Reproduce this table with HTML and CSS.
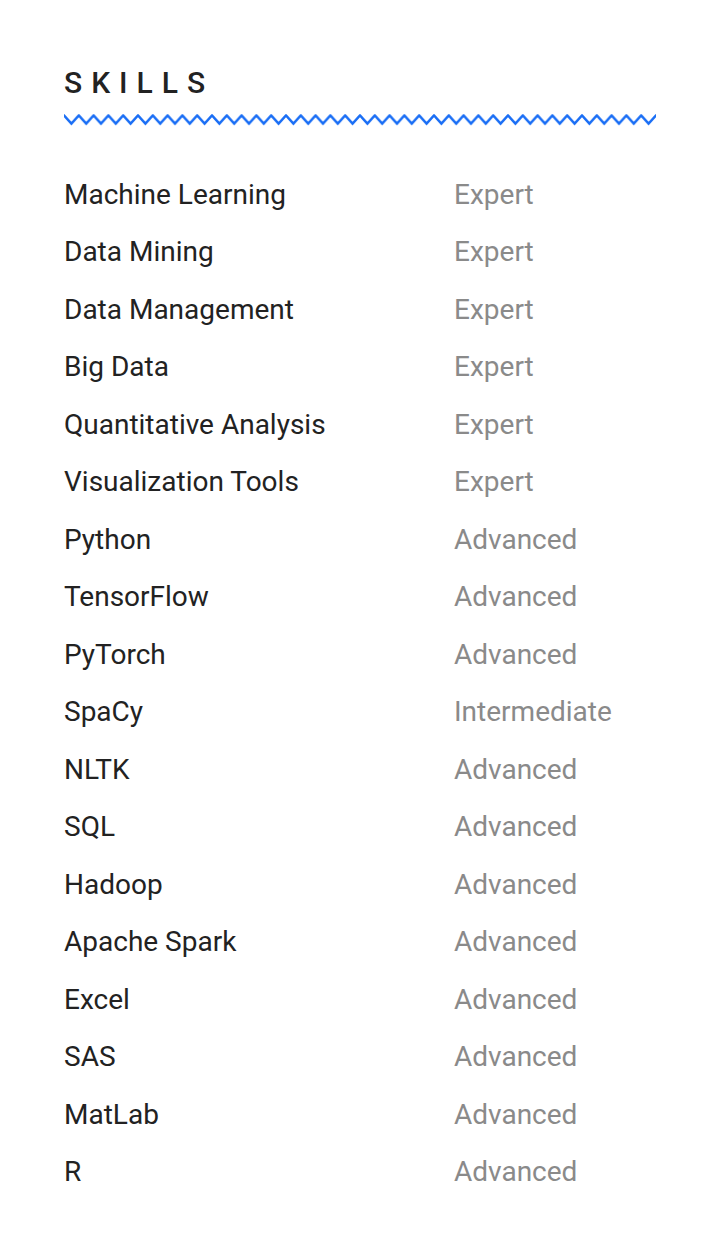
FILE: index.html
```html
<!DOCTYPE html>
<html lang="en">
<head>
<meta charset="utf-8">
<title>Skills</title>
<link rel="stylesheet" href="styles.css">
</head>
<body>
<section class="skills">
  <h2 class="skills-title">SKILLS</h2>
  <svg class="zigzag" width="592" height="14" viewBox="0 0 592 14" xmlns="http://www.w3.org/2000/svg">
    <defs>
      <pattern id="zz" x="0" y="0" width="14.8" height="14" patternUnits="userSpaceOnUse">
        <polyline points="-0.5,1.9 7.4,10.6 15.3,1.9" fill="none" stroke="#1a6ef5" stroke-width="2.4" stroke-linejoin="miter"/>
      </pattern>
    </defs>
    <rect x="0" y="0" width="592" height="14" fill="url(#zz)"/>
  </svg>
  <ul class="skill-list">
    <li class="skill"><span class="name">Machine Learning</span><span class="level">Expert</span></li>
    <li class="skill"><span class="name">Data Mining</span><span class="level">Expert</span></li>
    <li class="skill"><span class="name">Data Management</span><span class="level">Expert</span></li>
    <li class="skill"><span class="name">Big Data</span><span class="level">Expert</span></li>
    <li class="skill"><span class="name">Quantitative Analysis</span><span class="level">Expert</span></li>
    <li class="skill"><span class="name">Visualization Tools</span><span class="level">Expert</span></li>
    <li class="skill"><span class="name">Python</span><span class="level">Advanced</span></li>
    <li class="skill"><span class="name">TensorFlow</span><span class="level">Advanced</span></li>
    <li class="skill"><span class="name">PyTorch</span><span class="level">Advanced</span></li>
    <li class="skill"><span class="name">SpaCy</span><span class="level">Intermediate</span></li>
    <li class="skill"><span class="name">NLTK</span><span class="level">Advanced</span></li>
    <li class="skill"><span class="name">SQL</span><span class="level">Advanced</span></li>
    <li class="skill"><span class="name">Hadoop</span><span class="level">Advanced</span></li>
    <li class="skill"><span class="name">Apache Spark</span><span class="level">Advanced</span></li>
    <li class="skill"><span class="name">Excel</span><span class="level">Advanced</span></li>
    <li class="skill"><span class="name">SAS</span><span class="level">Advanced</span></li>
    <li class="skill"><span class="name">MatLab</span><span class="level">Advanced</span></li>
    <li class="skill"><span class="name">R</span><span class="level">Advanced</span></li>
  </ul>
</section>
</body>
</html>
```
FILE: styles.css
```css
html, body {
  margin: 0;
  padding: 0;
  background: #ffffff;
}

body {
  font-family: Roboto, "Liberation Sans", sans-serif;
  color: #222222;
}

.skills {
  padding: 65px 72px 40px 64px;
}

.skills-title {
  margin: 0;
  font-size: 30px;
  line-height: 36px;
  font-weight: 500;
  letter-spacing: 9px;
  color: #222222;
}

.zigzag {
  display: block;
  margin-top: 12px;
}

.skill-list {
  list-style: none;
  margin: 38.7px 0 0 0;
  padding: 0;
}

.skill {
  display: grid;
  grid-template-columns: 390px 1fr;
  height: 57.53px;
  line-height: 57.53px;
  font-size: 28px;
}

.name {
  color: #222222;
}

.level {
  color: #8a8a8a;
}
```
